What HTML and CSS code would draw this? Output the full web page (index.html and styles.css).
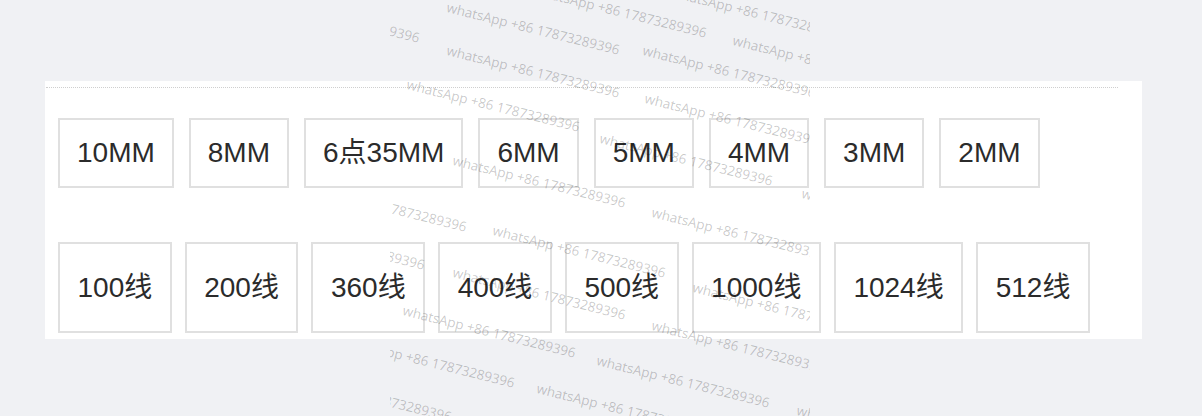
FILE: index.html
```html
<!DOCTYPE html>
<html lang="zh-CN">
<head>
  <meta charset="UTF-8">
  <meta name="viewport" content="width=device-width, initial-scale=1.0">
  <title>规格选择</title>
  <link rel="stylesheet" href="styles.css">
</head>
<body>
  <div class="spec-panel">
    <div class="spec-divider"></div>
    <div class="opt-row sizes">
      <span class="opt">10MM</span>
      <span class="opt">8MM</span>
      <span class="opt">6点35MM</span>
      <span class="opt">6MM</span>
      <span class="opt">5MM</span>
      <span class="opt">4MM</span>
      <span class="opt">3MM</span>
      <span class="opt">2MM</span>
    </div>
    <div class="opt-row lines">
      <span class="opt">100线</span>
      <span class="opt">200线</span>
      <span class="opt">360线</span>
      <span class="opt">400线</span>
      <span class="opt">500线</span>
      <span class="opt">1000线</span>
      <span class="opt">1024线</span>
      <span class="opt">512线</span>
    </div>
  </div>

  <!-- contact watermark, laid over the page -->
  <div class="watermark">
    <span class="wm" style="left:144px;top:-19px">whatsApp +86 17873289396</span>
    <span class="wm" style="left:282px;top:-17px">whatsApp +86 17873289396</span>
    <span class="wm" style="left:-143px;top:-14px">whatsApp +86 17873289396</span>
    <span class="wm" style="left:57px;top:-2px">whatsApp +86 17873289396</span>
    <span class="wm" style="left:343px;top:31px">whatsApp +86 17873289396</span>
    <span class="wm" style="left:57px;top:41px">whatsApp +86 17873289396</span>
    <span class="wm" style="left:253px;top:41px">whatsApp +86 17873289396</span>
    <span class="wm" style="left:17px;top:75px">whatsApp +86 17873289396</span>
    <span class="wm" style="left:255px;top:89px">whatsApp +86 17873289396</span>
    <span class="wm" style="left:210px;top:129px">whatsApp +86 17873289396</span>
    <span class="wm" style="left:63px;top:151px">whatsApp +86 17873289396</span>
    <span class="wm" style="left:-96px;top:175px">whatsApp +86 17873289396</span>
    <span class="wm" style="left:412px;top:184px">whatsApp +86 17873289396</span>
    <span class="wm" style="left:262px;top:203px">whatsApp +86 17873289396</span>
    <span class="wm" style="left:103px;top:221px">whatsApp +86 17873289396</span>
    <span class="wm" style="left:-138px;top:213px">whatsApp +86 17873289396</span>
    <span class="wm" style="left:63px;top:263px">whatsApp +86 17873289396</span>
    <span class="wm" style="left:303px;top:278px">whatsApp +86 17873289396</span>
    <span class="wm" style="left:13px;top:301px">whatsApp +86 17873289396</span>
    <span class="wm" style="left:262px;top:316px">whatsApp +86 17873289396</span>
    <span class="wm" style="left:-48px;top:331px">whatsApp +86 17873289396</span>
    <span class="wm" style="left:207px;top:351px">whatsApp +86 17873289396</span>
    <span class="wm" style="left:-111px;top:365px">whatsApp +86 17873289396</span>
    <span class="wm" style="left:147px;top:379px">whatsApp +86 17873289396</span>
    <span class="wm" style="left:407px;top:401px">whatsApp +86 17873289396</span>
  </div>
</body>
</html>
```

FILE: styles.css
```css
body {
  margin: 0;
  background-color: #f0f1f4;
  font-family: "Liberation Sans", "Noto Sans CJK SC", sans-serif;
  color: #2b2b2b;
}

.spec-panel {
  width: 1097px;
  height: 258px;
  margin: 81px 0 0 45px;
  padding: 6px 0 0 13px;
  box-sizing: border-box;
  background-color: #fff;
}

.spec-divider {
  margin: 0 24px 0 -12px;
  border-top: 1px dotted #cfcfcf;
}

.opt-row {
  display: flex;
  gap: 15px;
}
.opt-row.sizes {
  margin-top: 30px;
}
.opt-row.lines {
  margin-top: 54px;
  gap: 13px;
}

.opt {
  display: block;
  padding: 0 17px;
  border: 2px solid #e0e0e0;
  font-size: 28px;
  height: 66px;
  line-height: 66px;
  white-space: nowrap;
}
.opt-row.lines .opt {
  padding: 0 17.5px;
  height: 87px;
  line-height: 87px;
}

/* rotated contact text over the middle of the page */
.watermark {
  position: absolute;
  left: 390px;
  top: 0;
  width: 420px;
  height: 416px;
  overflow: hidden;
  pointer-events: none;
}
.wm {
  position: absolute;
  font-family: "Open Sans", sans-serif;
  font-size: 13.5px;
  line-height: 18px;
  color: rgba(0, 0, 0, 0.22);
  white-space: nowrap;
  transform-origin: 0 50%;
  transform: rotate(14deg);
}
```
